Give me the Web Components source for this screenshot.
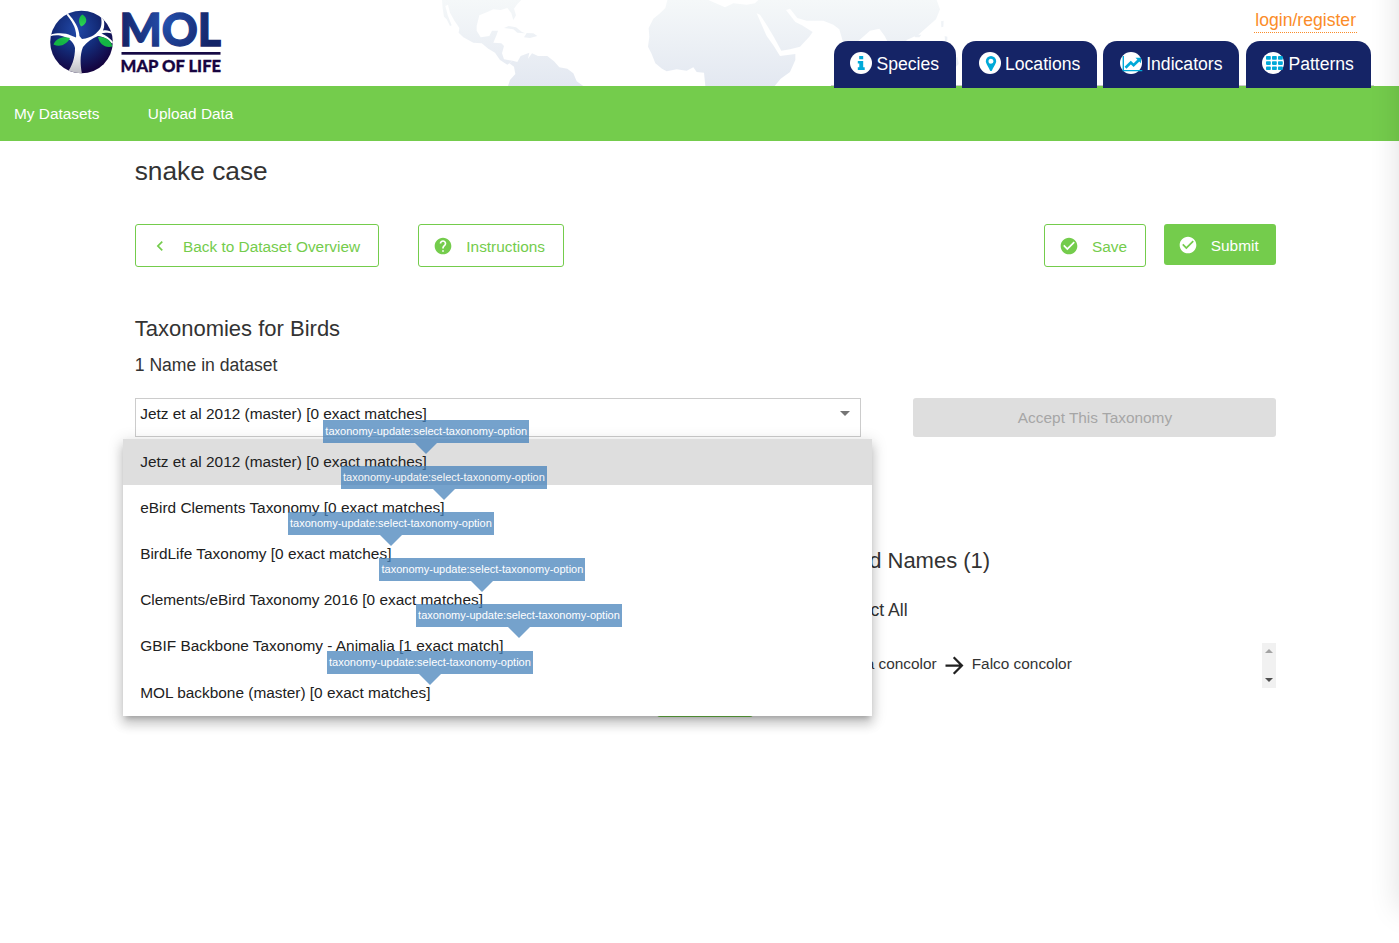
<!DOCTYPE html>
<html lang="en">
<head>
<meta charset="utf-8">
<title>Map of Life</title>
<style>
html,body{margin:0;height:100%;overflow:hidden;background:#fff}
body{font:15.4px/1.2 "Liberation Sans",Arial,sans-serif;color:#333}
</style>
</head>
<body>
<mol-app></mol-app>
<script>
const define = (name, html) => customElements.define(name, class extends HTMLElement {
  constructor() {
    super();
    const t = document.createElement('template');
    t.innerHTML = html;
    this.attachShadow({ mode: 'open' }).append(t.content.cloneNode(true));
  }
});

const ICONS = {
  back: '<path d="M15.41 7.41 14 6l-6 6 6 6 1.41-1.41L10.83 12z"/>',
  help: '<path d="M12 2C6.48 2 2 6.48 2 12s4.48 10 10 10 10-4.48 10-10S17.52 2 12 2zm1 17h-2v-2h2v2zm2.07-7.75-.9.92C13.45 12.9 13 13.5 13 15h-2v-.5c0-1.1.45-2.1 1.17-2.83l1.24-1.26c.37-.36.59-.86.59-1.41 0-1.1-.9-2-2-2s-2 .9-2 2H8c0-2.21 1.79-4 4-4s4 1.79 4 4c0 .88-.36 1.68-.93 2.25z"/>',
  check: '<path d="M12 2C6.48 2 2 6.48 2 12s4.48 10 10 10 10-4.48 10-10S17.52 2 12 2zm-2 15-5-5 1.41-1.41L10 14.17l7.59-7.59L19 8l-9 9z"/>',
  arrow: '<path d="M12 4l-1.41 1.41L16.17 11H4v2h12.17l-5.58 5.59L12 20l8-8z"/>',
  info: '<circle cx="11" cy="11" r="11" fill="#fff"/><path fill="#00a9d8" d="M9.200 4h4v3.300h-4zM7.800 9h5.400v6.300h1.500v2.600H7.800v-2.600h1.500v-3.700H7.800z"/>',
  pin: '<circle cx="11" cy="11" r="11" fill="#fff"/><path fill="#00a9d8" fill-rule="evenodd" d="M12 4a5.2 5.2 0 0 1 5.2 5.2c0 2.2-3.3 6.800-4.200 9.200a1.100 1.100 0 0 1-2 0c-.9-2.400-4.200-7-4.200-9.200A5.200 5.200 0 0 1 12 4zm0 2.700a2.500 2.500 0 1 0 0 5 2.500 2.500 0 0 0 0-5z"/>',
  chart: '<circle cx="11" cy="11" r="11" fill="#fff"/><path fill="none" stroke="#00a9d8" stroke-width="1.400" d="M3.300 4v14.600h19"/><path fill="none" stroke="#00a9d8" stroke-width="2.700" d="M5.500 15.800l5.300-5.200 2.800 2.600 5.600-5.400"/><path fill="#00a9d8" d="M15.500 5.800h5.500v5.500z"/>',
  grid: '<circle cx="11" cy="11" r="11" fill="#fff"/><g fill="#00a9d8"><rect x="4" y="4" width="4.800" height="3.700" rx=".8"/><rect x="10" y="4" width="4.800" height="3.700" rx=".8"/><rect x="16" y="4" width="4.800" height="3.700" rx=".8"/><rect x="4" y="9.200" width="4.800" height="3.700" rx=".8"/><rect x="10" y="9.200" width="4.800" height="3.700" rx=".8"/><rect x="16" y="9.200" width="4.800" height="3.700" rx=".8"/><rect x="4" y="14.400" width="4.800" height="3.700" rx=".8"/><rect x="10" y="14.400" width="4.800" height="3.700" rx=".8"/><rect x="16" y="14.400" width="4.800" height="3.700" rx=".8"/></g>'
};

customElements.define('mol-icon', class extends HTMLElement {
  connectedCallback() {
    const box = this.getAttribute('box') || 24;
    this.attachShadow({ mode: 'open' }).innerHTML =
      `<style>:host{display:block;flex:none;width:20px;height:20px}svg{display:block;width:100%;height:100%;fill:currentColor;overflow:visible}</style>
       <svg viewBox="0 0 ${box} ${box}">${ICONS[this.getAttribute('name')]}</svg>`;
  }
});

define('mol-logo', `
<style>:host{display:block;width:190px;height:86px}svg{display:block}</style>
<svg width="190" height="86" viewBox="45 0 190 86">
  <defs>
    <radialGradient id="globe" cx=".42" cy=".3" r=".7"><stop offset="0" stop-color="#2149a8"/><stop offset=".5" stop-color="#132b78"/><stop offset="1" stop-color="#14033f"/></radialGradient>
    <radialGradient id="word" gradientUnits="userSpaceOnUse" cx="166" cy="22" r="48"><stop offset="0" stop-color="#2450ad"/><stop offset="1" stop-color="#142468"/></radialGradient>
    <linearGradient id="trunk" x1="0" y1="0" x2="0" y2="1"><stop offset=".6" stop-color="#fff"/><stop offset="1" stop-color="#b9b9c0"/></linearGradient>
    <radialGradient id="leaf"><stop offset="0" stop-color="#37e05a"/><stop offset="1" stop-color="#14b544"/></radialGradient>
    <clipPath id="disc"><circle cx="81.500" cy="42" r="31.300"/></clipPath>
  </defs>
  <circle cx="81.500" cy="42" r="31.300" fill="url(#globe)"/>
  <g clip-path="url(#disc)">
    <path fill="url(#trunk)" d="M66 74C72 67 75 58 75 48C74 42 68 37 60 35.500C56 34.800 52 35.500 49 36.500L49 34.800C58 32.500 66 33 71 35.500L76 37.500C77 29 72 21 66 14L67.500 13C75 21 79 28 79.500 36L82 39C92 38 97 33 100 29C102 25 102 19 100 14L102.500 16C104.500 21 105 26 103 30.500C107 29.500 110 31 114 33V34C108 32.500 104 32.500 101.500 33.500C106 35.500 110 38 114 43L112 43.500C107 38.500 103 36.500 98 36C92 38.500 87 42 83 47C80 54 80 64 82 74Z"/>
  </g>
  <path fill="url(#leaf)" d="M82.500 14.500C88 18 87.500 24 81 26.500C78 22 78.500 17 82.500 14.500ZM70 38C67 44.500 60 47.500 53.500 44.500C56.500 38 63 36 70 38ZM98 37C106 36.500 111 40 112.500 46.500C105 48.500 99.500 44 98 37Z"/>
  <text x="119.500" y="45.700" textLength="101.500" lengthAdjust="spacingAndGlyphs" font-family="Lato,sans-serif" font-weight="900" font-size="45" fill="url(#word)" stroke="url(#word)" stroke-width="1.300">MOL</text>
  <rect x="121.500" y="52" width="99" height="2.700" fill="#160a45"/>
  <text x="120.600" y="72" textLength="100.500" lengthAdjust="spacingAndGlyphs" font-family="Lato,sans-serif" font-weight="900" font-size="16.800" fill="#170541" stroke="#170541" stroke-width=".3">MAP OF LIFE</text>
</svg>`);

define('mol-world', `
<style>:host{display:block;width:530px;height:86px}svg{display:block}</style>
<svg width="530" height="86" viewBox="0 0 1590 258">
  <defs><linearGradient id="g" gradientUnits="userSpaceOnUse" x1="0" y1="0" x2="0" y2="258"><stop offset="0" stop-color="#f5f8f9"/><stop offset="1" stop-color="#e3e8f1"/></linearGradient></defs>
  <g fill="url(#g)">
    <path d="M36 0L38 25 42 50 50 58 60 78 65 76 54 48 46 18 54 14 60 38 72 60 88 84 86 98 100 112 130 128 155 130 175 146 195 158 210 180 232 194 248 182 238 181 222 178 216 160 222 138 214 130 190 128 200 104 204 92 186 92 178 108 152 112 140 92 140 78 148 46 172 36 190 28 212 30 232 24 244 40 250 60 258 46 252 26 262 12 274 0Z"/>
    <path d="M234 258L240 240 256 222 252 200 238 190 248 182 262 186 272 168 298 158 294 176 306 160 324 168 352 168 372 184 388 202 412 206 430 220 440 244 460 258Z"/>
    <path d="M222 84L236 78 258 82 276 96 286 100 262 98 250 88ZM290 99L310 100 322 108 300 114 282 112Z"/>
    <path d="M712 0L706 24 690 40 670 56 656 84 658 110 654 140 664 160 676 190 696 206 710 214 740 208 770 212 790 202 800 216 822 218 826 258H1034L1052 236 1080 216 1096 180 1096 162 1050 168 1030 136 1010 108 980 40 990 44 1012 78 1032 112 1054 152 1080 148 1110 140 1138 110 1148 96 1116 76 1096 66 1068 30 1080 26 1102 54 1130 62 1180 62 1210 74 1228 88 1240 130 1256 152 1266 152 1284 124 1320 92 1348 86 1364 108 1378 136 1400 150 1424 136 1430 120 1465 104 1495 78 1518 58 1530 28 1520 0H985L975 10 950 14 910 10 885 22 835 0Z"/>
    <path d="M1446 100L1458 92 1474 92 1464 104 1474 104 1468 112 1456 112ZM1533 64L1541 62 1540 80 1534 82ZM1544 108L1552 110 1552 122 1545 122ZM1574 176L1582 170 1586 192 1578 200Z"/>
  </g>
</svg>`);

define('mol-tab', `
<style>:host{display:flex;box-sizing:border-box;height:47px;padding:0 17px 2px 16px;gap:4.400px;align-items:center;background:#152466;color:#fff;border-radius:14px 14px 0 0;font-size:17.6px;line-height:20px;white-space:nowrap}
::slotted(mol-icon){width:22px;height:22px;margin-top:-2px}</style>
<slot name="icon"></slot><slot></slot>`);

define('mol-header', `
<style>
:host{display:flex;position:relative;height:86px;box-sizing:border-box;justify-content:space-between;background:#fff}
mol-logo{margin-left:45px}
mol-world{position:absolute;left:430px;top:0}
.right{position:relative;display:flex;flex-direction:column;align-items:flex-end;margin-right:25px}
.login{color:#fb8c28;font-size:17.6px;line-height:20px;margin:10px 17px 8px 0;padding:0 1px 2px;border-bottom:1px dotted #fb8c28}
.tabs{display:flex;padding:0 3px;height:44px;border-bottom:1px solid #ccc}
.tabs mol-tab{position:relative;z-index:1}
</style>
<mol-world></mol-world><mol-logo></mol-logo>
<div class="right">
  <div class="login">login/register</div>
  <div class="tabs">
    <mol-tab style="width:122px;margin-right:6px"><mol-icon slot="icon" name="info" box="22"></mol-icon>Species</mol-tab>
    <mol-tab style="width:135px;margin-right:6px;padding-left:17px;gap:4px"><mol-icon slot="icon" name="pin" box="22"></mol-icon>Locations</mol-tab>
    <mol-tab style="width:136px;margin-right:7px;padding-left:17px;gap:4.200px"><mol-icon slot="icon" name="chart" box="22"></mol-icon>Indicators</mol-tab>
    <mol-tab style="width:125px"><mol-icon slot="icon" name="grid" box="22"></mol-icon>Patterns</mol-tab>
  </div>
</div>`);

define('mol-nav', `
<style>:host{display:flex;align-items:center;gap:48.300px;height:55px;padding-left:14px;background:#74cc4c;color:#fff;line-height:18px}</style><slot></slot>`);

define('mol-button', `
<style>
:host{display:flex;box-sizing:border-box;height:43px;padding:0 18px 0 14px;gap:13.300px;align-items:center;border:1px solid #74cc4c;border-radius:3px;color:#74cc4c;white-space:nowrap;line-height:18px}
:host([solid]){height:41px;background:#74cc4c;color:#fff;border:0;padding:0 16px 0 13.500px}
:host([disabled]){height:39px;background:#dedede;color:#a6a6a6;border:0;padding:0 0 0 1px;justify-content:center}
::slotted(span){position:relative}
</style><slot name="icon"></slot><slot></slot>`);

define('mol-select', `
<style>:host{display:flex;box-sizing:border-box;height:39px;border:1px solid #ccc;padding:6px 10px 0 4.200px;justify-content:space-between;color:#212121;line-height:18px}
i{width:0;height:0;border:5.500px solid transparent;border-top-color:#757575;border-bottom:0;margin-top:6px}</style>
<span><slot></slot></span><i></i>`);

define('mol-option', `
<style>
:host{display:flex;box-sizing:border-box;height:46px;align-items:center;padding-left:17.200px;color:#212121;line-height:18px;white-space:nowrap}
:host(:last-child){height:47px;padding-top:1px}
:host([selected]){background:#dedede}
.label{position:relative}
.tip{position:absolute;left:calc(100% + var(--tip-shift,0px));top:-33px;margin-left:-103.500px;box-sizing:border-box;width:206px;height:23px;background:#4783bc;opacity:.75;color:#fff;font-size:11px;line-height:23px;text-align:center;z-index:2}
.tip::after{content:"";position:absolute;left:50%;top:100%;margin-left:-11px;border:11px solid transparent;border-top-color:#4783bc;border-bottom:0}
</style>
<span class="label"><slot></slot><span class="tip">taxonomy-update:select-taxonomy-option</span></span>`);

define('mol-menu', `
<style>:host{display:block;background:#fff;box-shadow:0 5px 5px -3px rgba(0,0,0,.2),0 8px 10px 1px rgba(0,0,0,.14),0 3px 14px 2px rgba(0,0,0,.12)}</style><slot></slot>`);

define('mol-names', `
<style>
:host{display:flex;flex-direction:column;color:#333}
h3{margin:0;font-weight:400;font-size:22px;line-height:26px}
.all{font-size:17.600px;line-height:20px;margin:26px 0 0 38.300px}
.row{display:flex;justify-content:space-between;height:45px;margin-top:23px}
.pair{display:flex;align-items:center;height:42px;padding-left:68.700px;line-height:18px}
mol-icon{width:27px;height:27px;margin:2px 4px 0;color:#212121}
.bar{width:14px;background:#f1f1f1;display:flex;flex-direction:column;justify-content:space-between;align-items:center;padding:6px 0;box-sizing:border-box}
.bar i{border:4px solid transparent;border-top-width:0;border-bottom-color:#a3a3a3}
.bar i+i{border:4px solid transparent;border-bottom-width:0;border-top-color:#505050}
</style>
<h3>Matched Names (1)</h3><div class="all">Select All</div>
<div class="row"><div class="pair"><span>a concolor</span><mol-icon name="arrow"></mol-icon><span>Falco concolor</span></div><div class="bar"><i></i><i></i></div></div>`);

define('mol-app', `
<style>
:host{display:block;position:relative;height:943px;overflow:hidden}
main{position:relative;width:1141px;margin-left:135px}
h1,h2,h3{margin:0;font-weight:400}
h1{font-size:26.300px;line-height:30px;padding-top:15px}
.actions{display:flex;align-items:flex-start;margin-top:38px}
.actions .gap{flex:1}
h2{font-size:22px;line-height:26px;margin-top:49px}
h3{font-size:17.600px;line-height:20px;margin-top:13px}
h1,h2,h3{text-indent:-.3px}
.choose{display:grid;grid-template-columns:726px 363px;justify-content:space-between;margin-top:23px}
mol-names{margin:111px 0 0 662px}
mol-menu{position:absolute;left:-12px;top:298px;width:749px;height:277px}
.more{width:96px;height:36px;background:#74cc4c;border-radius:3px;margin:-7px 0 0 522px}
.edge{position:absolute;left:100%;top:-60px;width:40px;height:970px;box-shadow:0 0 30px rgba(0,0,0,.13);z-index:5}
</style>
<mol-header></mol-header>
<mol-nav><span>My Datasets</span><span>Upload Data</span></mol-nav>
<main>
  <h1>snake case</h1>
  <div class="actions">
    <mol-button style="width:244px;margin-right:39px;padding-left:13.500px;gap:13.500px"><mol-icon slot="icon" name="back"></mol-icon><span style="top:1px">Back to Dataset Overview</span></mol-button>
    <mol-button style="width:146px"><mol-icon slot="icon" name="help"></mol-icon><span style="top:1px">Instructions</span></mol-button>
    <div class="gap"></div>
    <mol-button style="width:102px;margin-right:18px;gap:13px"><mol-icon slot="icon" name="check"></mol-icon><span style="top:1px">Save</span></mol-button>
    <mol-button solid style="width:112px"><mol-icon slot="icon" name="check"></mol-icon><span style="top:1px">Submit</span></mol-button>
  </div>
  <h2>Taxonomies for Birds</h2>
  <h3>1 Name in dataset</h3>
  <div class="choose"><mol-select>Jetz et al 2012 (master) [0 exact matches]</mol-select><mol-button disabled>Accept This Taxonomy</mol-button></div>
  <mol-names></mol-names>
  <div class="more"></div>
  <mol-menu>
    <mol-option selected>Jetz et al 2012 (master) [0 exact matches]</mol-option>
    <mol-option>eBird Clements Taxonomy [0 exact matches]</mol-option>
    <mol-option>BirdLife Taxonomy [0 exact matches]</mol-option>
    <mol-option>Clements/eBird Taxonomy 2016 [0 exact matches]</mol-option>
    <mol-option style="--tip-shift:16px">GBIF Backbone Taxonomy - Animalia [1 exact match]</mol-option>
    <mol-option>MOL backbone (master) [0 exact matches]</mol-option>
  </mol-menu>
</main>
<div class="edge"></div>`);
</script>
</body>
</html>
